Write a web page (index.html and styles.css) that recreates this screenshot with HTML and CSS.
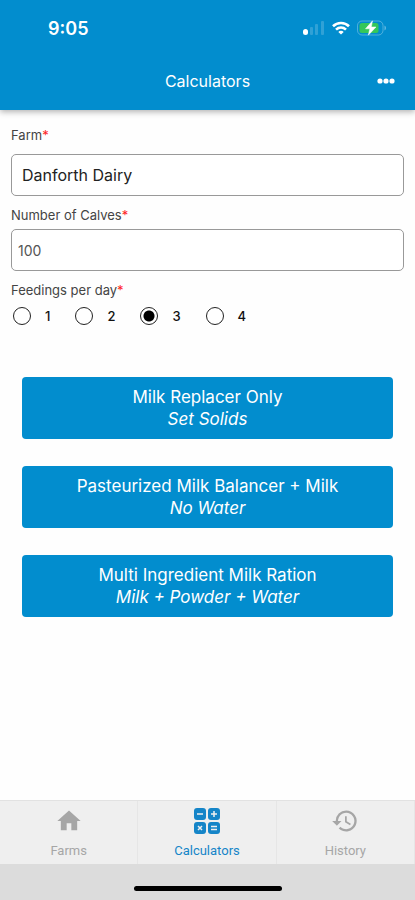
FILE: index.html
```html
<!DOCTYPE html>
<html lang="en">
<head>
    <meta charset="UTF-8">
    <meta name="viewport" content="width=device-width, initial-scale=1.0">
    <title>Calculators</title>
    <link rel="stylesheet" href="styles.css">
</head>
<body>
    <!-- Header -->
    <header>
        <div class="status-bar">
            <span class="time">9:05</span>
            <div class="status-icons">
                <svg width="22" height="14" viewBox="0 0 22 14" fill="#fff">
                    <rect x="0" y="8" width="5" height="6" rx="2.500"/>
                    <g opacity="0.18">
                        <rect x="7" y="6" width="3" height="8" rx="1"/>
                        <rect x="12" y="3" width="3" height="11" rx="1"/>
                        <rect x="18" y="0" width="3" height="14" rx="1"/>
                    </g>
                </svg>
                <svg width="18" height="14" viewBox="0 0 18 14" fill="none" stroke="#fff" stroke-width="2.6">
                    <path d="M1 5.200C5.400 .9 12.600 .9 17 5.200"/>
                    <path d="M4 8.600C6.900 5.900 11.100 5.900 14 8.600"/>
                    <path d="M9 13.600L6.300 10.900C7.800 9.500 10.200 9.500 11.700 10.900Z" fill="#fff" stroke="none"/>
                </svg>
                <svg width="30" height="16" viewBox="0 0 30 16">
                    <rect x=".5" y="1" width="25.500" height="14" rx="4.500" fill="none" stroke="#fff" stroke-opacity=".3"/>
                    <path d="M27.500 5.500C29.500 6.500 29.500 9.500 27.500 10.500Z" fill="#fff" opacity=".4"/>
                    <rect x="2.500" y="3" width="19" height="10" rx="2.500" fill="#35c759"/>
                    <path d="M15.500 .8L8.500 8.800H12.800L11.300 15.200L19 7H14.300Z" fill="#fff" stroke="#fff" stroke-width=".5"/>
                </svg>
            </div>
        </div>
        <div class="title-bar">
            <h1>Calculators</h1>
            <button type="button" class="more" aria-label="More">
                <svg width="18" height="6" viewBox="0 0 18 6" fill="#fff">
                    <circle cx="3" cy="3" r="2.600"/>
                    <circle cx="9" cy="3" r="2.600"/>
                    <circle cx="15" cy="3" r="2.600"/>
                </svg>
            </button>
        </div>
    </header>

    <main>
        <form>
            <label class="field-label" for="farm">Farm<span class="required">*</span></label>
            <select id="farm" class="field farm">
                <option>Danforth Dairy</option>
            </select>

            <label class="field-label" for="calves">Number of Calves<span class="required">*</span></label>
            <input id="calves" class="field calves" type="text" inputmode="numeric" value="100">

            <fieldset>
                <legend class="field-label">Feedings per day<span class="required">*</span></legend>
                <div class="feedings">
                    <label><input type="radio" name="feedings" value="1">1</label>
                    <label><input type="radio" name="feedings" value="2">2</label>
                    <label><input type="radio" name="feedings" value="3" checked>3</label>
                    <label><input type="radio" name="feedings" value="4">4</label>
                </div>
            </fieldset>

            <!-- Calculator choices -->
            <div class="calculators">
                <button type="button">Milk Replacer Only<em>Set Solids</em></button>
                <button type="button">Pasteurized Milk Balancer + Milk<em>No Water</em></button>
                <button type="button">Multi Ingredient Milk Ration<em>Milk + Powder + Water</em></button>
            </div>
        </form>
    </main>

    <!-- Bottom tabs -->
    <footer>
        <nav>
            <a href="#">
                <svg width="28" height="28" viewBox="0 0 24 24" fill="currentColor">
                    <path d="M10 20V14H14V20H19V12H22L12 3L2 12H5V20Z"/>
                </svg>
                Farms
            </a>
            <a href="#" class="active">
                <svg width="28" height="28" viewBox="0 0 28 28">
                    <g fill="currentColor">
                        <rect x="1" y="1" width="12" height="12" rx="3"/>
                        <rect x="15" y="1" width="12" height="12" rx="3"/>
                        <rect x="1" y="15" width="12" height="12" rx="3"/>
                        <rect x="15" y="15" width="12" height="12" rx="3"/>
                    </g>
                    <path d="M4 7H10M18 7H24M21 4V10M5 19L9 23M9 19L5 23M18 19.500H24M18 22.500H24" stroke="#efefef" stroke-width="1.500"/>
                </svg>
                Calculators
            </a>
            <a href="#">
                <svg width="28" height="28" viewBox="0 0 24 24" fill="currentColor">
                    <path d="M13 3a9 9 0 0 0-9 9H1l3.900 3.900.1.100L9 12H6a7 7 0 1 1 2.060 4.940l-1.420 1.420A9 9 0 1 0 13 3zm-1 5v5l4.280 2.540.72-1.210-3.500-2.080V8z"/>
                </svg>
                History
            </a>
        </nav>
        <div class="home-bar"><span></span></div>
    </footer>
</body>
</html>
```
FILE: styles.css
```css
* {
    box-sizing: border-box;
}

body {
    font-family: Inter, sans-serif;
    margin: 0;
    min-height: 100vh;
    display: flex;
    flex-direction: column;
    background-color: #fefefe;
    color: #444;
}

button,
input,
select {
    font-family: inherit;
}

/* Header */
header {
    background-color: #028dce;
    color: #fff;
    box-shadow: 0 2px 6px rgba(0, 0, 0, 0.3);
}
.status-bar {
    height: 56px;
    padding: 0 28px 0 48px;
    display: flex;
    align-items: center;
    justify-content: space-between;
}
.time {
    font-size: 18px;
    font-weight: 600;
}
.status-icons {
    display: flex;
    align-items: center;
    gap: 7px;
}
.title-bar {
    height: 54px;
    padding: 0 20px 4px;
    display: grid;
    grid-template-columns: 1fr auto 1fr;
    align-items: center;
}
h1 {
    grid-column: 2;
    margin: 0;
    font-size: 16px;
    font-weight: 400;
}
.more {
    justify-self: end;
    display: flex;
    padding: 6px 0;
    border: none;
    background: none;
}

/* Form */
main {
    flex: 1;
    padding: 16px 11px;
}
.field-label {
    display: block;
    padding: 0;
    font-size: 13px;
    line-height: 18px;
}
.required {
    color: #f22;
}
.field {
    display: block;
    width: 100%;
    height: 42px;
    margin: 10px 0;
    padding: 0 6px;
    border: 1px solid #999;
    border-radius: 5px;
    background-color: #fff;
    color: #555;
    font-size: 14px;
    appearance: none;
}
.farm {
    padding: 0 10px;
    color: #222;
    font-size: 16px;
}
.calves {
    margin-top: 5px; /* Sits closer to its label */
}
fieldset {
    margin: 0;
    padding: 0;
    border: none;
}
.feedings {
    display: flex;
    gap: 25px;
    padding: 8px 2px;
}
.feedings label {
    display: flex;
    align-items: center;
    gap: 14px;
    color: #111;
    font-size: 13px;
    font-weight: 500;
}
.feedings input {
    appearance: none;
    width: 18px;
    height: 18px;
    margin: 0;
    border: 1px solid #222;
    border-radius: 50%;
    background-color: #fff;
}
.feedings input:checked {
    background: radial-gradient(circle, #000 5px, #fff 6px);
}

/* Calculator buttons */
.calculators {
    display: flex;
    flex-direction: column;
    gap: 27px;
    padding: 44px 11px 0;
}
.calculators button {
    padding: 9px;
    border: none;
    border-radius: 4px;
    background-color: #028dce;
    color: #fff;
    font-size: 17px;
    line-height: 22px;
}
.calculators em {
    display: block;
}

/* Bottom tabs */
nav {
    display: flex;
    border-top: 1px solid #e2e2e2;
    background-color: #efefef;
}
nav a {
    flex: 1;
    display: flex;
    flex-direction: column;
    align-items: center;
    gap: 8px;
    padding: 6px 0 5px;
    border-right: 1px solid #e6e6e6;
    color: #a6a6a6;
    font-family: Roboto, sans-serif;
    font-size: 13px;
    line-height: 16px;
    text-decoration: none;
}
nav a.active {
    color: #1585c8;
}
.home-bar {
    height: 36px;
    padding-top: 22px;
    background-color: #dcdcdc;
}
.home-bar span {
    display: block;
    width: 148px;
    height: 5px;
    margin: 0 auto;
    border-radius: 3px;
    background-color: #000;
}
```
